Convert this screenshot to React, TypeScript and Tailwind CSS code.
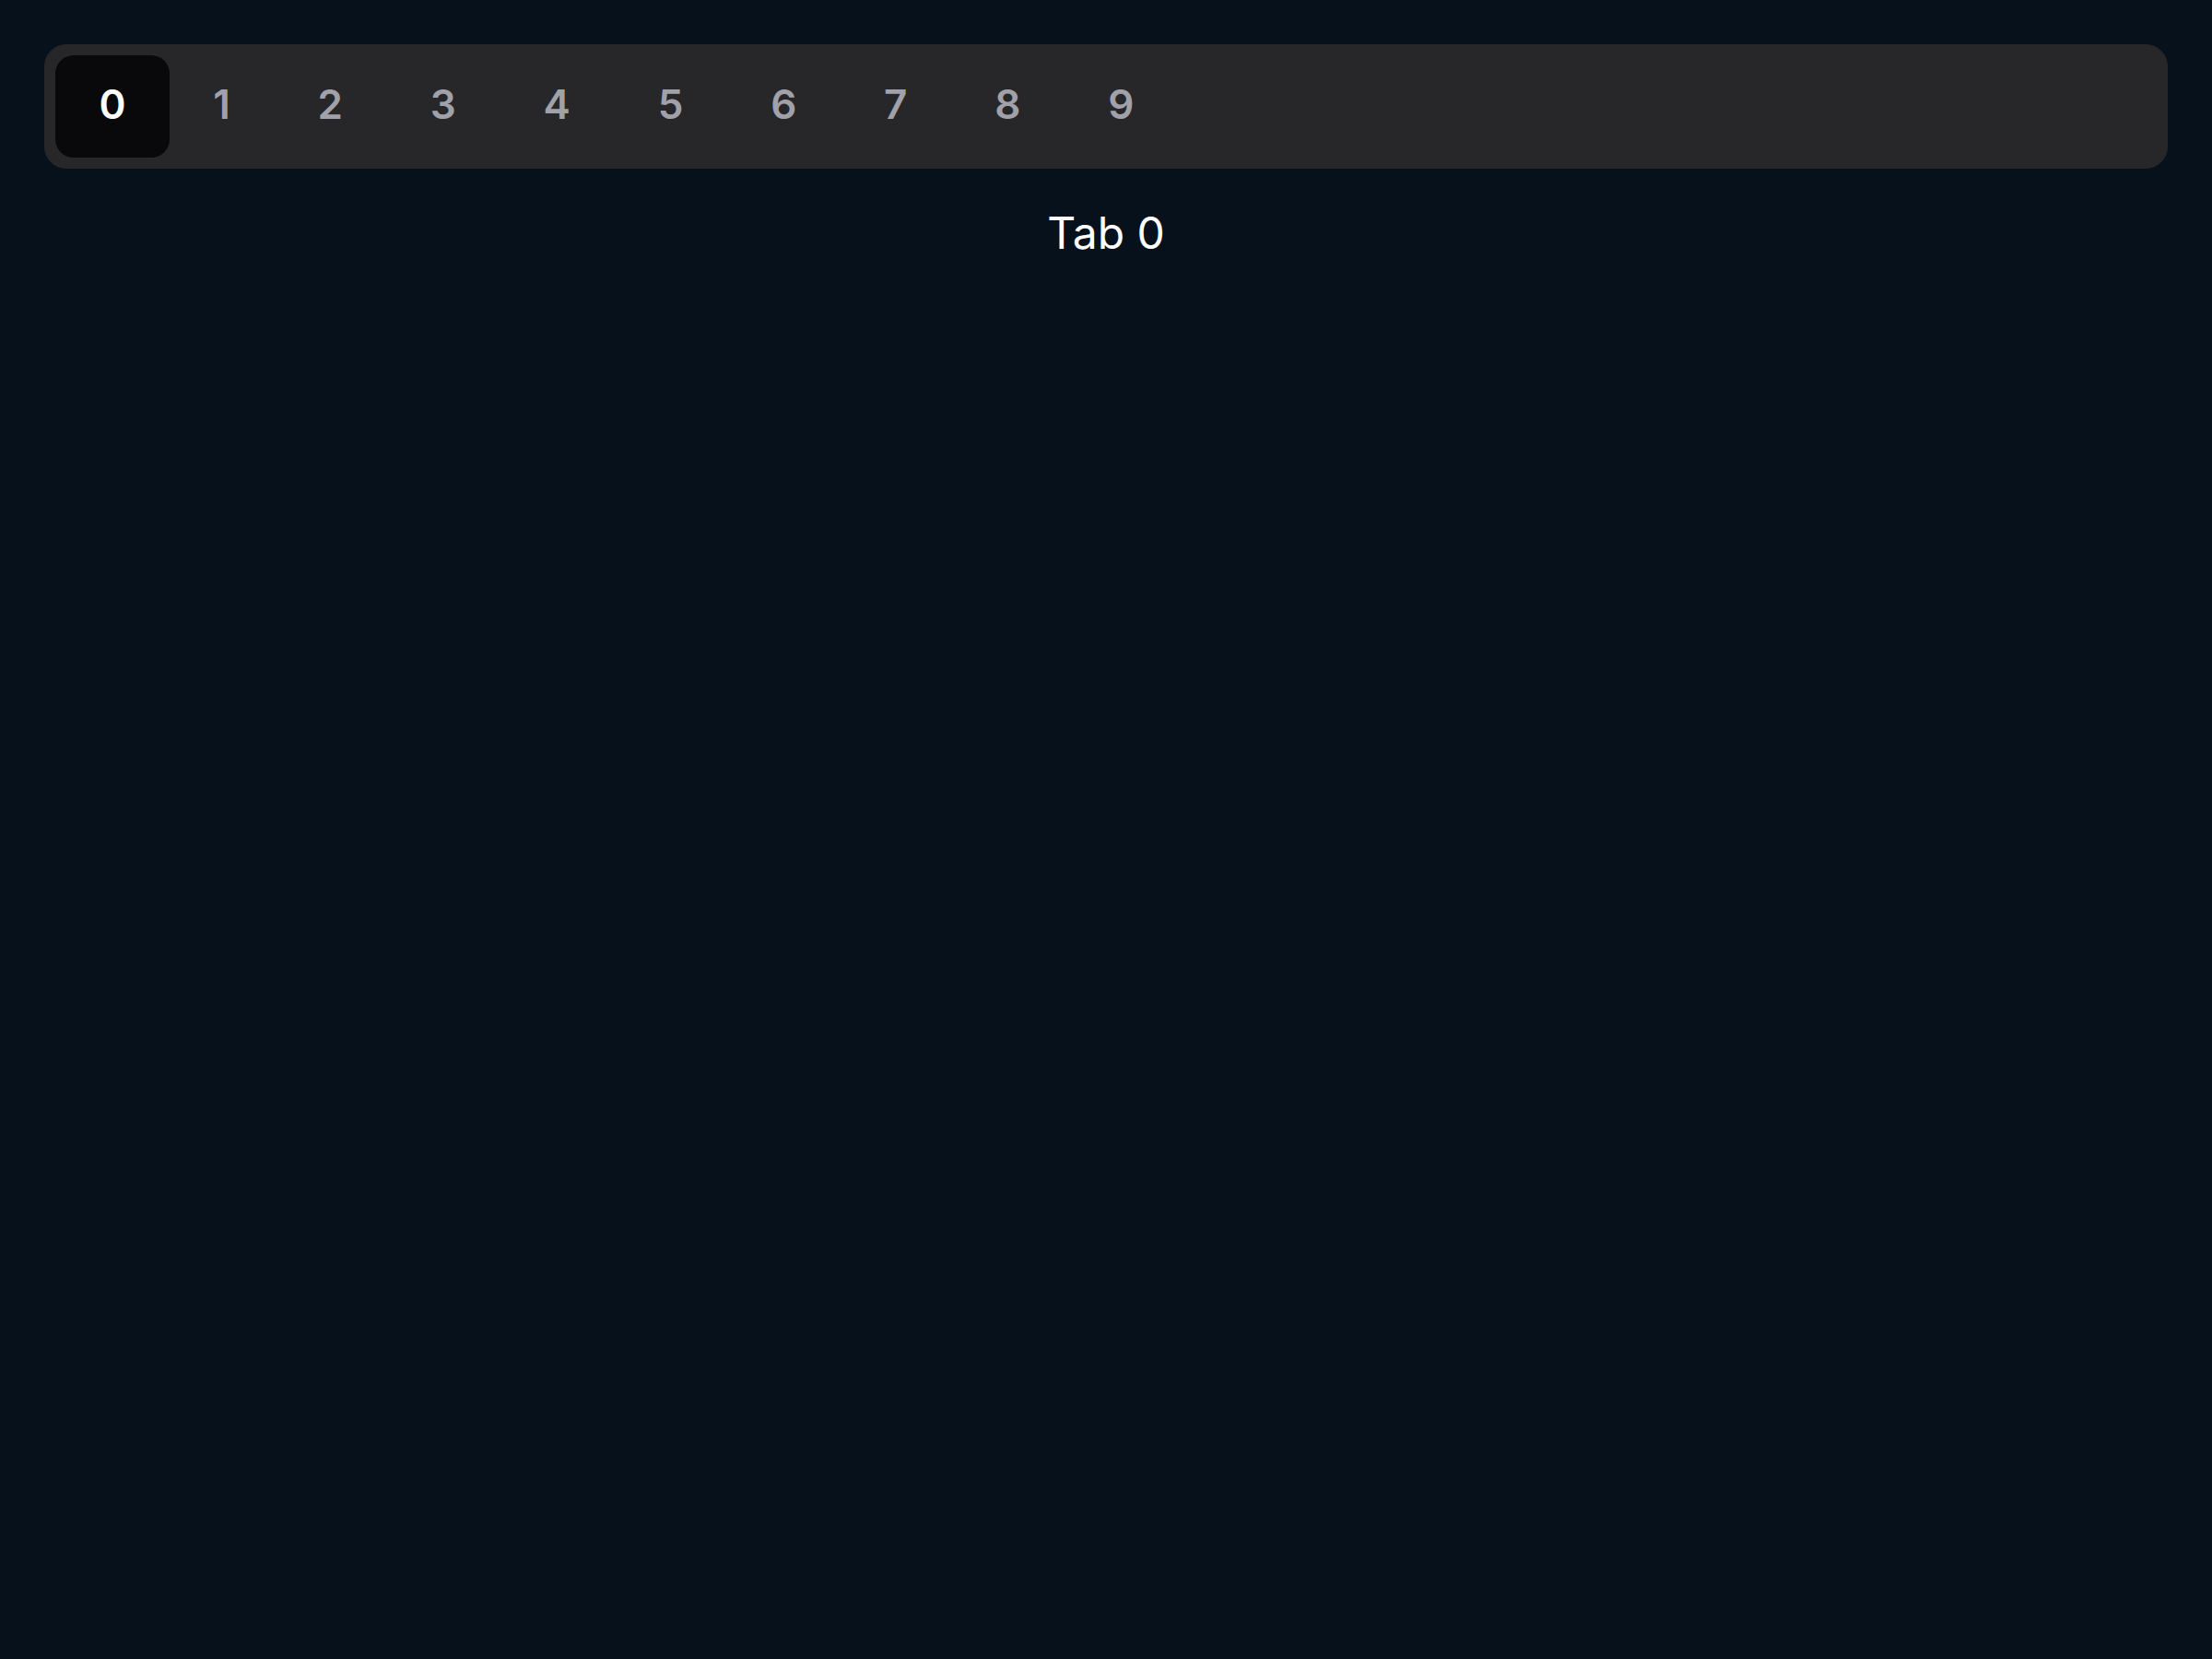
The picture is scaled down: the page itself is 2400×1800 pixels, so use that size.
import { useState } from "react";

const tabs = ["0", "1", "2", "3", "4", "5", "6", "7", "8", "9"];

export default function App() {
  const [active, setActive] = useState("0");

  return (
    <div
      className="min-h-screen bg-[#07111c] p-12 text-white"
      style={{ fontFamily: "Inter, 'Noto Sans', sans-serif" }}
    >
      <div className="flex h-[135px] items-center rounded-3xl bg-[#27272a] p-3">
        {tabs.map((t) => (
          <button
            key={t}
            onClick={() => setActive(t)}
            className={
              t === active
                ? "flex h-[111px] items-center justify-center rounded-[20px] bg-[#09090b] px-[47.4px] pb-[6px] text-[44px] font-semibold text-white"
                : "flex h-[111px] items-center justify-center rounded-[20px] px-[47.4px] pb-[6px] text-[44px] font-semibold text-[#a1a1aa]"
            }
          >
            {t}
          </button>
        ))}
      </div>
      <div className="mt-[34px] text-center text-[48px] leading-[72px]">Tab {active}</div>
    </div>
  );
}
